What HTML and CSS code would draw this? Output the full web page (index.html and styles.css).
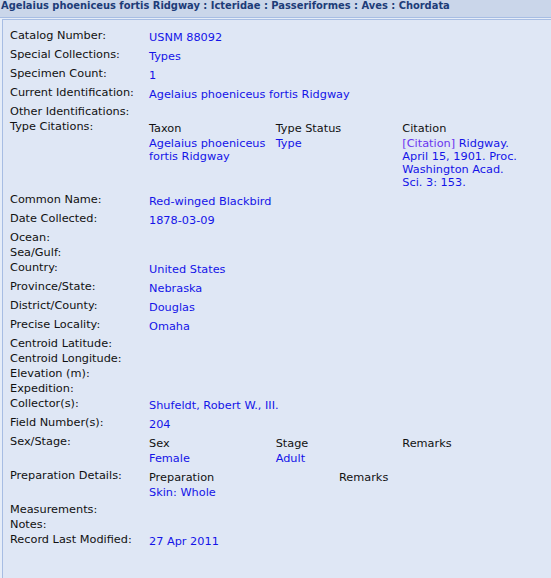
FILE: index.html
```html
<!DOCTYPE html>
<html>
<head>
    <meta charset="utf-8">
    <title>USNM 88092 - Agelaius phoeniceus fortis Ridgway</title>
    <link rel="stylesheet" href="styles.css">
</head>
<body>
    <div class="title-bar">Agelaius phoeniceus fortis Ridgway : Icteridae : Passeriformes : Aves : Chordata</div>

    <div class="frame">
        <div class="panel">
            <table class="fields">
                <tr><td class="label">Catalog Number:</td><td class="value">USNM 88092</td></tr>
                <tr><td class="label">Special Collections:</td><td class="value">Types</td></tr>
                <tr><td class="label">Specimen Count:</td><td class="value">1</td></tr>
                <tr><td class="label">Current Identification:</td><td class="value">Agelaius phoeniceus fortis Ridgway</td></tr>
                <tr><td class="label">Other Identifications:</td><td class="empty"></td></tr>
                <tr>
                    <td class="label">Type Citations:</td>
                    <td class="value">
                        <table class="sub cols-3">
                            <tr><th>Taxon</th><th>Type Status</th><th>Citation</th></tr>
                            <tr>
                                <td>Agelaius phoeniceus fortis Ridgway</td>
                                <td>Type</td>
                                <td><span class="visited">[Citation]</span> Ridgway. April 15, 1901. Proc. Washington Acad. Sci. 3: 153.</td>
                            </tr>
                        </table>
                    </td>
                </tr>
                <tr><td class="label">Common Name:</td><td class="value">Red-winged Blackbird</td></tr>
                <tr><td class="label">Date Collected:</td><td class="value">1878-03-09</td></tr>
                <tr><td class="label">Ocean:</td><td class="empty"></td></tr>
                <tr><td class="label">Sea/Gulf:</td><td class="empty"></td></tr>
                <tr><td class="label">Country:</td><td class="value">United States</td></tr>
                <tr><td class="label">Province/State:</td><td class="value">Nebraska</td></tr>
                <tr><td class="label">District/County:</td><td class="value">Douglas</td></tr>
                <tr><td class="label">Precise Locality:</td><td class="value">Omaha</td></tr>
                <tr><td class="label">Centroid Latitude:</td><td class="empty"></td></tr>
                <tr><td class="label">Centroid Longitude:</td><td class="empty"></td></tr>
                <tr><td class="label">Elevation (m):</td><td class="empty"></td></tr>
                <tr><td class="label">Expedition:</td><td class="empty"></td></tr>
                <tr><td class="label">Collector(s):</td><td class="value">Shufeldt, Robert W., III.</td></tr>
                <tr><td class="label">Field Number(s):</td><td class="value">204</td></tr>
                <tr>
                    <td class="label">Sex/Stage:</td>
                    <td class="value">
                        <table class="sub cols-3">
                            <tr><th>Sex</th><th>Stage</th><th>Remarks</th></tr>
                            <tr><td>Female</td><td>Adult</td><td></td></tr>
                        </table>
                    </td>
                </tr>
                <tr>
                    <td class="label">Preparation Details:</td>
                    <td class="value">
                        <table class="sub cols-2">
                            <tr><th>Preparation</th><th>Remarks</th></tr>
                            <tr><td>Skin: Whole</td><td></td></tr>
                        </table>
                    </td>
                </tr>
                <tr><td class="label">Measurements:</td><td class="empty"></td></tr>
                <tr><td class="label">Notes:</td><td class="empty"></td></tr>
                <tr><td class="label">Record Last Modified:</td><td class="value">27 Apr 2011</td></tr>
            </table>
        </div>
    </div>
</body>
</html>
```

FILE: styles.css
```css
* { box-sizing: border-box; }
body {
    margin: 0;
    height: 578px;
    overflow: hidden;
    font-family: "DejaVu Sans", Verdana, sans-serif;
    font-size: 11.3px;
    color: #111;
    background: #e6edf8;
}
.title-bar {
    height: 17px;
    padding: 0 0 0 1px;
    background: #cad6ea;
    color: #1d3c78;
    font-family: "DejaVu Sans Condensed", "DejaVu Sans", sans-serif;
    font-stretch: condensed;
    font-size: 11px;
    font-weight: bold;
    line-height: 12px;
    white-space: nowrap;
    overflow: hidden;
}
.frame {
    border-top: 1px solid #a7bde3;
    padding: 1px 0 0 2px;
    height: calc(100% - 17px);
}
.panel {
    height: 100%;
    background: #dfe7f5;
    border-top: 1px solid #a7bde3;
    border-left: 1px solid #a7bde3;
    padding: 8px 0 0 7px;
}
.fields { border-collapse: collapse; }
.fields td { padding: 0; vertical-align: top; line-height: 15px; }
.fields .label { width: 139px; white-space: nowrap; }
.fields .value { padding: 2px 0; color: #1414e8; }
.sub {
    width: 380px;
    table-layout: fixed;
    border-collapse: collapse;
}
.sub th, .sub td {
    padding: 1px 0;
    line-height: 13px;
    text-align: left;
    vertical-align: top;
    font-weight: normal;
}
.sub th { color: #111; }
.sub td { color: #1414e8; padding-right: 4px; }
.visited { color: #6a35f0; }
```
